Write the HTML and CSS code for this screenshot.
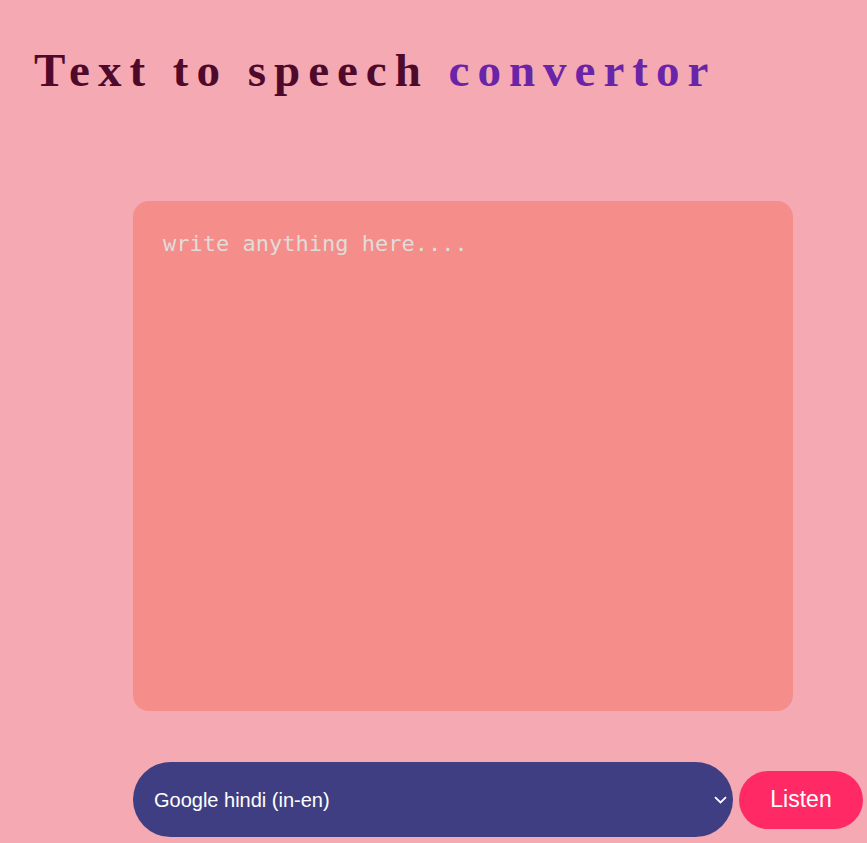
FILE: index.html
```html
<!DOCTYPE html>
<html>
<head>
<meta charset="utf-8">
<link rel="stylesheet" href="styles.css">
</head>
<body>
<h1 class="title">Text to speech <span class="accent">convertor</span></h1>
<main class="main">
  <textarea class="input" placeholder="write anything here...."></textarea>
  <div class="controls">
    <div class="select-wrap">
      <select class="voice">
        <option>Google hindi (in-en)</option>
      </select>
      <svg class="chev" width="13" height="8" viewBox="0 0 13 8"><path d="M1 1.2 L6.5 6.5 L12 1.2" fill="none" stroke="#fff" stroke-width="1.8"/></svg>
    </div>
    <button class="listen">Listen</button>
  </div>
</main>
</body>
</html>
```
FILE: styles.css
```css
html, body {
  margin: 0;
  padding: 0;
}
body {
  background: #f4a9b3;
  height: 843px;
  overflow: hidden;
}
.title {
  margin: 0;
  padding: 44px 0 0 34px;
  font-family: "Liberation Serif", serif;
  font-weight: bold;
  font-size: 47px;
  line-height: 52px;
  letter-spacing: 8px;
  color: #4f0a2b;
  white-space: nowrap;
}
.accent {
  color: #6a24a8;
}
.main {
  padding: 105px 0 0 133px;
}
.input {
  display: block;
  box-sizing: border-box;
  width: 660px;
  height: 510px;
  margin: 0;
  padding: 30px;
  border: none;
  border-radius: 16px;
  background: #f58d8b;
  resize: none;
  outline: none;
  font-family: "DejaVu Sans Mono", monospace;
  font-size: 22px;
  color: #333;
}
.input::placeholder {
  color: #e2dcd8;
}
.controls {
  margin-top: 51px;
  display: flex;
  align-items: center;
  gap: 6px;
}
.select-wrap {
  position: relative;
}
.voice {
  display: block;
  appearance: none;
  -webkit-appearance: none;
  width: 600px;
  height: 75px;
  border: none;
  border-radius: 38px;
  background: #403e82;
  color: #fff;
  font-family: "Liberation Sans", Arial, sans-serif;
  font-size: 20px;
  padding: 0 21px;
  outline: none;
}
.chev {
  position: absolute;
  right: 6px;
  top: 34px;
}
.listen {
  width: 124px;
  height: 58px;
  border: none;
  border-radius: 29px;
  background: #ff2965;
  color: #fff;
  font-family: "Liberation Sans", Arial, sans-serif;
  font-size: 23px;
  padding: 0;
}
```
